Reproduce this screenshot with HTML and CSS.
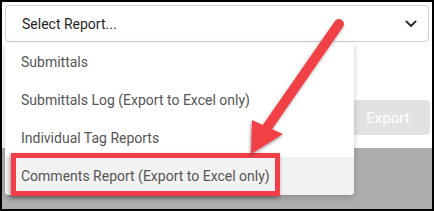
FILE: index.html
```html
<!DOCTYPE html>
<html lang="en">
<head>
    <meta charset="UTF-8">
    <title>Select Report</title>
    <link rel="stylesheet" href="styles.css">
</head>
<body>

    <div class="shot">
        <!-- Report picker -->
        <div class="top">
            <div class="select">
                <span>Select Report...</span>
                <svg class="chevron" width="12" height="8" viewBox="0 0 12 8">
                    <path d="M1.5 1.5 L6 6 L10.5 1.5" fill="none" stroke="#333" stroke-width="2" stroke-linecap="round" stroke-linejoin="round"/>
                </svg>
            </div>
            <div class="actions">
                <button class="export">Export</button>
            </div>
        </div>
        <div class="backdrop"></div>

        <!-- Open dropdown -->
        <ul class="menu">
            <li>Submittals</li>
            <li>Submittals Log (Export to Excel only)</li>
            <li>Individual Tag Reports</li>
            <li class="hover">Comments Report (Export to Excel only)</li>
        </ul>

        <!-- Annotation -->
        <div class="callout"></div>
        <svg class="arrow" width="434" height="211" viewBox="0 0 434 211">
            <defs>
                <filter id="shade" x="-20%" y="-20%" width="140%" height="140%">
                    <feDropShadow dx="-1" dy="2" stdDeviation="1.5" flood-color="#000" flood-opacity="0.4"/>
                </filter>
            </defs>
            <g filter="url(#shade)" fill="#f23f47" stroke="#f23f47">
                <line x1="339" y1="24" x2="264" y2="132" stroke-width="10" stroke-linecap="round"/>
                <polygon points="251,154 252,120 283,134" stroke="none"/>
            </g>
        </svg>
    </div>

</body>
</html>
```

FILE: styles.css
```css
* {
    margin: 0;
    padding: 0;
    box-sizing: border-box;
}

body {
    font-family: Roboto, 'Liberation Sans', sans-serif;
    background: #fff;
}

.shot {
    width: 434px;
    height: 211px;
    border: 2px solid #000;
    display: flex;
    flex-direction: column;
    position: relative;
    overflow: hidden;
}

.top {
    height: 146px;
    background: #fff;
    padding: 3px 3px 0 3px;
}

.select {
    height: 37px;
    border: 1px solid #cfcfcf;
    border-radius: 4px;
    display: flex;
    align-items: center;
    justify-content: space-between;
    padding: 0 11px 0 16px;
    font-size: 14px;
    color: #1f1f1f;
}

.actions {
    display: flex;
    justify-content: flex-end;
    margin-top: 58px;
}

.export {
    width: 84px;
    height: 35px;
    border: none;
    border-radius: 4px;
    background: #e2e2e2;
    color: #fff;
    font-family: inherit;
    font-size: 15px;
    margin-right: -1px;
}

.backdrop {
    flex: 1;
    background: #adadad;
}

/* Dropdown list */
.menu {
    position: absolute;
    left: 3px;
    top: 41px;
    width: 349px;
    list-style: none;
    background: #fff;
    border-radius: 0 0 4px 4px;
    box-shadow: 0 2px 6px rgba(0, 0, 0, 0.2);
    overflow: hidden;
}

.menu li {
    height: 38px;
    line-height: 38px;
    padding-left: 16px;
    font-size: 14px;
    color: #555;
    white-space: nowrap;
}

.menu li.hover {
    background: #f2f2f2;
}

/* Red highlight box */
.callout {
    position: absolute;
    left: 9px;
    top: 151px;
    width: 269px;
    height: 43px;
    border: 5px solid #f23f47;
    box-shadow: -1px 2px 4px rgba(0, 0, 0, 0.4);
}

.arrow {
    position: absolute;
    left: -2px;
    top: -2px;
}
```
